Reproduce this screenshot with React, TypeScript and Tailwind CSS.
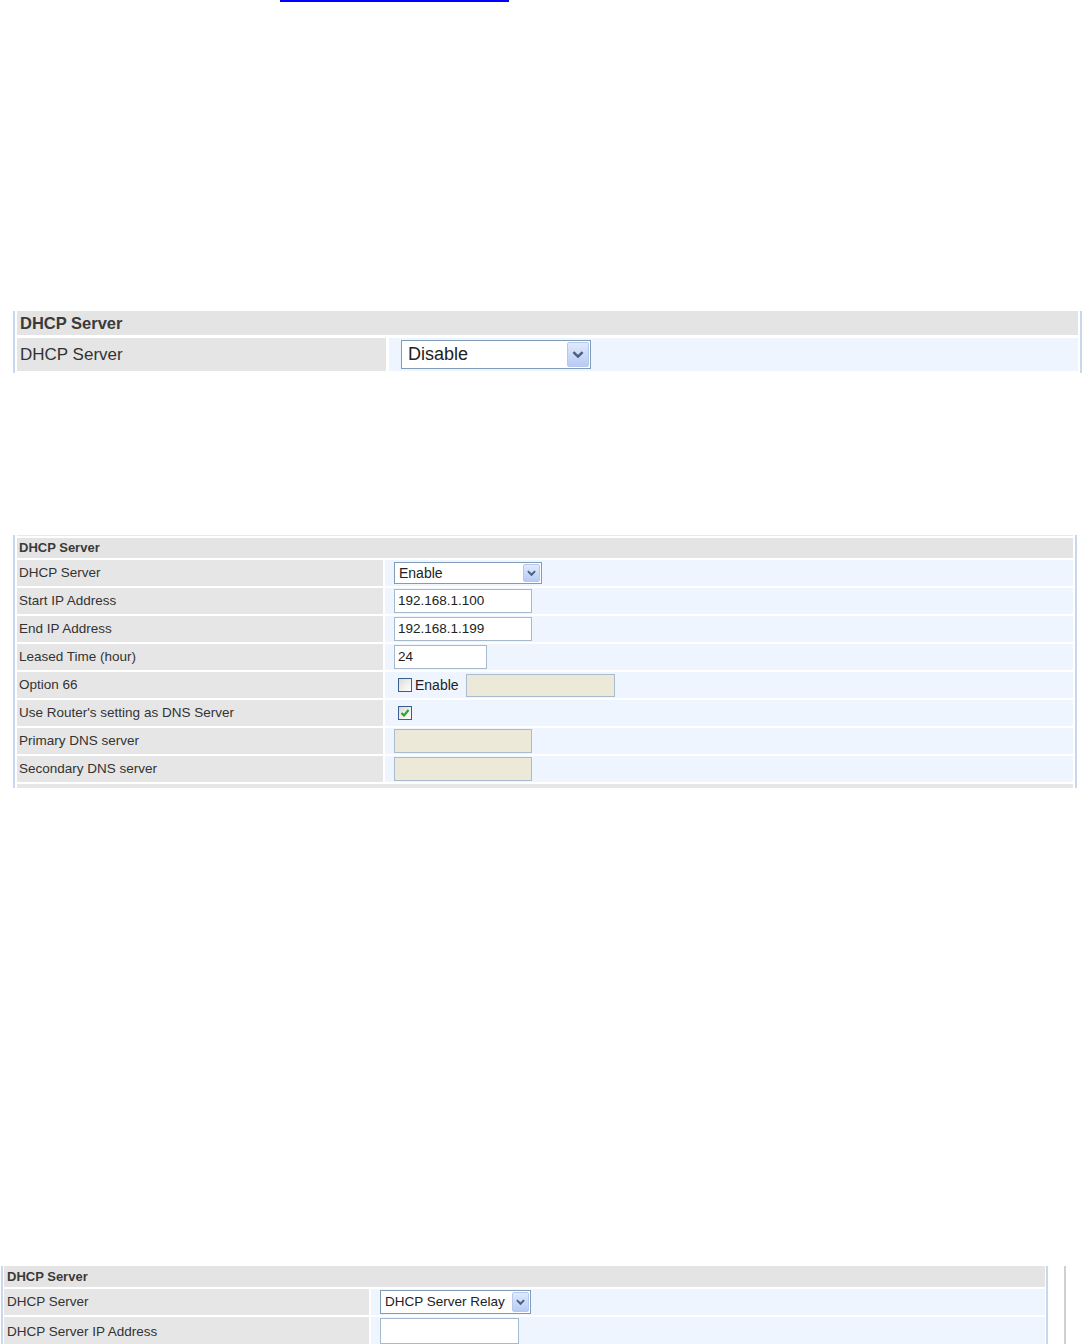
import React from "react";

const FONT = { fontFamily: '"Liberation Sans", Arial, sans-serif' };

function Chevron({ size }: { size: number }) {
  return (
    <svg width={size} height={size} viewBox="0 0 12 12">
      <path d="M2.8 4.2 L6 7.4 L9.2 4.2" fill="none" stroke="#4a5f86" strokeWidth="2.1" strokeLinecap="square" />
    </svg>
  );
}

function SelectBox({
  text,
  cls,
  btnCls,
  textCls,
  chev,
}: {
  text: string;
  cls: string;
  btnCls: string;
  textCls: string;
  chev: number;
}) {
  return (
    <div className={`flex items-center justify-between bg-white border border-[#7f9db9] ${cls}`}>
      <span className={`text-[#222] ${textCls}`}>{text}</span>
      <div
        className={`flex items-center justify-center rounded-[2px] border border-[#b6c8ee] bg-gradient-to-b from-[#e1eafd] to-[#b7cbf4] ${btnCls}`}
      >
        <Chevron size={chev} />
      </div>
    </div>
  );
}

function TextInput({ value, cls, disabled }: { value?: string; cls: string; disabled?: boolean }) {
  return (
    <div
      className={`flex items-center border ${disabled ? "bg-[#ece9d8] border-[#a9bccf]" : "bg-white border-[#a5b9d1]"} pl-[3px] text-[13.5px] text-[#222] ${cls}`}
    >
      {value}
    </div>
  );
}

function Check({ checked }: { checked?: boolean }) {
  return (
    <div className="w-[14px] h-[14px] border border-[#3a5f8f] bg-gradient-to-br from-[#dcdcd6] to-[#ffffff] flex items-center justify-center">
      {checked && (
        <svg width="10" height="10" viewBox="0 0 10 10">
          <path d="M1.5 5 L4 7.5 L8.5 2" fill="none" stroke="#22a321" strokeWidth="2" />
        </svg>
      )}
    </div>
  );
}

function Row2({ label, children }: { label: string; children?: React.ReactNode }) {
  return (
    <div className="h-[26px] mt-[2px] flex gap-[2px]">
      <div className="w-[366px] bg-[#e6e6e6] flex items-center pl-[2px] text-[13.5px] text-[#333]">{label}</div>
      <div className="flex-1 bg-[#eef5fe] flex items-center pl-[9px]">{children}</div>
    </div>
  );
}

export default function App() {
  return (
    <div className="bg-white w-[1083px] h-[1344px] overflow-hidden" style={FONT}>
      <div className="ml-[280px] w-[229px] h-[2px] bg-[#0000ff]" />

      {/* Panel 1 */}
      <div className="mt-[309px] ml-[13px] w-[1069px] h-[62px] border-x-2 border-[#c8d7ec] px-[2px]">
        <div className="h-[24px] bg-[#e4e4e4] flex items-center pl-[3px] text-[16.5px] font-bold text-[#3a3a3a]">
          DHCP Server
        </div>
        <div className="mt-[3px] h-[33px] flex gap-[3px]">
          <div className="w-[369px] bg-[#e5e5e5] flex items-center pl-[3px] text-[17px] text-[#333]">DHCP Server</div>
          <div className="flex-1 bg-[#eef5fe] flex items-center pl-[12px]">
            <SelectBox
              text="Disable"
              cls="w-[190px] h-[29px] pl-[6px] pr-[1px]"
              btnCls="w-[22px] h-[25px]"
              textCls="text-[18px]"
              chev={14}
            />
          </div>
        </div>
      </div>

      {/* Panel 2 */}
      <div className="mt-[162px] ml-[13px] w-[1064px] h-[253px] border-x-2 border-[#c8d7ec] px-[2px]">
        <div className="h-[1px] bg-[#e2eaf4]" />
        <div className="mt-[2px] h-[20px] bg-[#e4e4e4] flex items-center pl-[2px] text-[13px] font-bold text-[#3a3a3a]">
          DHCP Server
        </div>
        <Row2 label="DHCP Server">
          <SelectBox
            text="Enable"
            cls="w-[148px] h-[22px] pl-[4px] pr-[1px]"
            btnCls="w-[17px] h-[18px]"
            textCls="text-[14px]"
            chev={11}
          />
        </Row2>
        <Row2 label="Start IP Address">
          <TextInput value="192.168.1.100" cls="w-[138px] h-[24px]" />
        </Row2>
        <Row2 label="End IP Address">
          <TextInput value="192.168.1.199" cls="w-[138px] h-[24px]" />
        </Row2>
        <Row2 label="Leased Time (hour)">
          <TextInput value="24" cls="w-[93px] h-[24px]" />
        </Row2>
        <Row2 label="Option 66">
          <div className="ml-[4px] flex items-center">
            <Check />
            <span className="ml-[3px] text-[14px] text-[#222]">Enable</span>
            <TextInput disabled cls="ml-[7px] w-[149px] h-[23px]" />
          </div>
        </Row2>
        <Row2 label="Use Router's setting as DNS Server">
          <div className="ml-[4px] flex items-center">
            <Check checked />
          </div>
        </Row2>
        <Row2 label="Primary DNS server">
          <TextInput disabled cls="w-[138px] h-[24px]" />
        </Row2>
        <Row2 label="Secondary DNS server">
          <TextInput disabled cls="w-[138px] h-[24px]" />
        </Row2>
        <div className="mt-[2px] h-[4px] bg-[#e6e6e6]" />
      </div>

      {/* Panel 3 */}
      <div className="mt-[478px] flex">
        <div className="ml-[1px] w-[1047px] h-[100px] border-x-2 border-[#c8d7ec] px-[1px]">
          <div className="h-[21px] bg-[#e4e4e4] flex items-center pl-[3px] text-[13px] font-bold text-[#3a3a3a]">
            DHCP Server
          </div>
          <div className="mt-[2px] h-[26px] flex gap-[2px]">
            <div className="w-[365px] bg-[#e6e6e6] flex items-center pl-[3px] text-[13.5px] text-[#333]">DHCP Server</div>
            <div className="flex-1 bg-[#eef5fe] flex items-center pl-[9px]">
              <SelectBox
                text="DHCP Server Relay"
                cls="w-[151px] h-[24px] pl-[4px] pr-[1px]"
                btnCls="w-[17px] h-[20px]"
                textCls="text-[13.5px]"
                chev={11}
              />
            </div>
          </div>
          <div className="mt-[2px] h-[30px] flex gap-[2px]">
            <div className="w-[365px] bg-[#e6e6e6] flex items-start pt-[5px] pl-[3px] text-[13.5px] text-[#333]">
              DHCP Server IP Address
            </div>
            <div className="flex-1 bg-[#eef5fe] flex items-start pt-[1px] pl-[9px]">
              <TextInput cls="w-[139px] h-[26px]" />
            </div>
          </div>
        </div>
        <div className="ml-[16px] w-[2px] h-[100px] bg-[#d0d0d0]" />
      </div>
    </div>
  );
}
